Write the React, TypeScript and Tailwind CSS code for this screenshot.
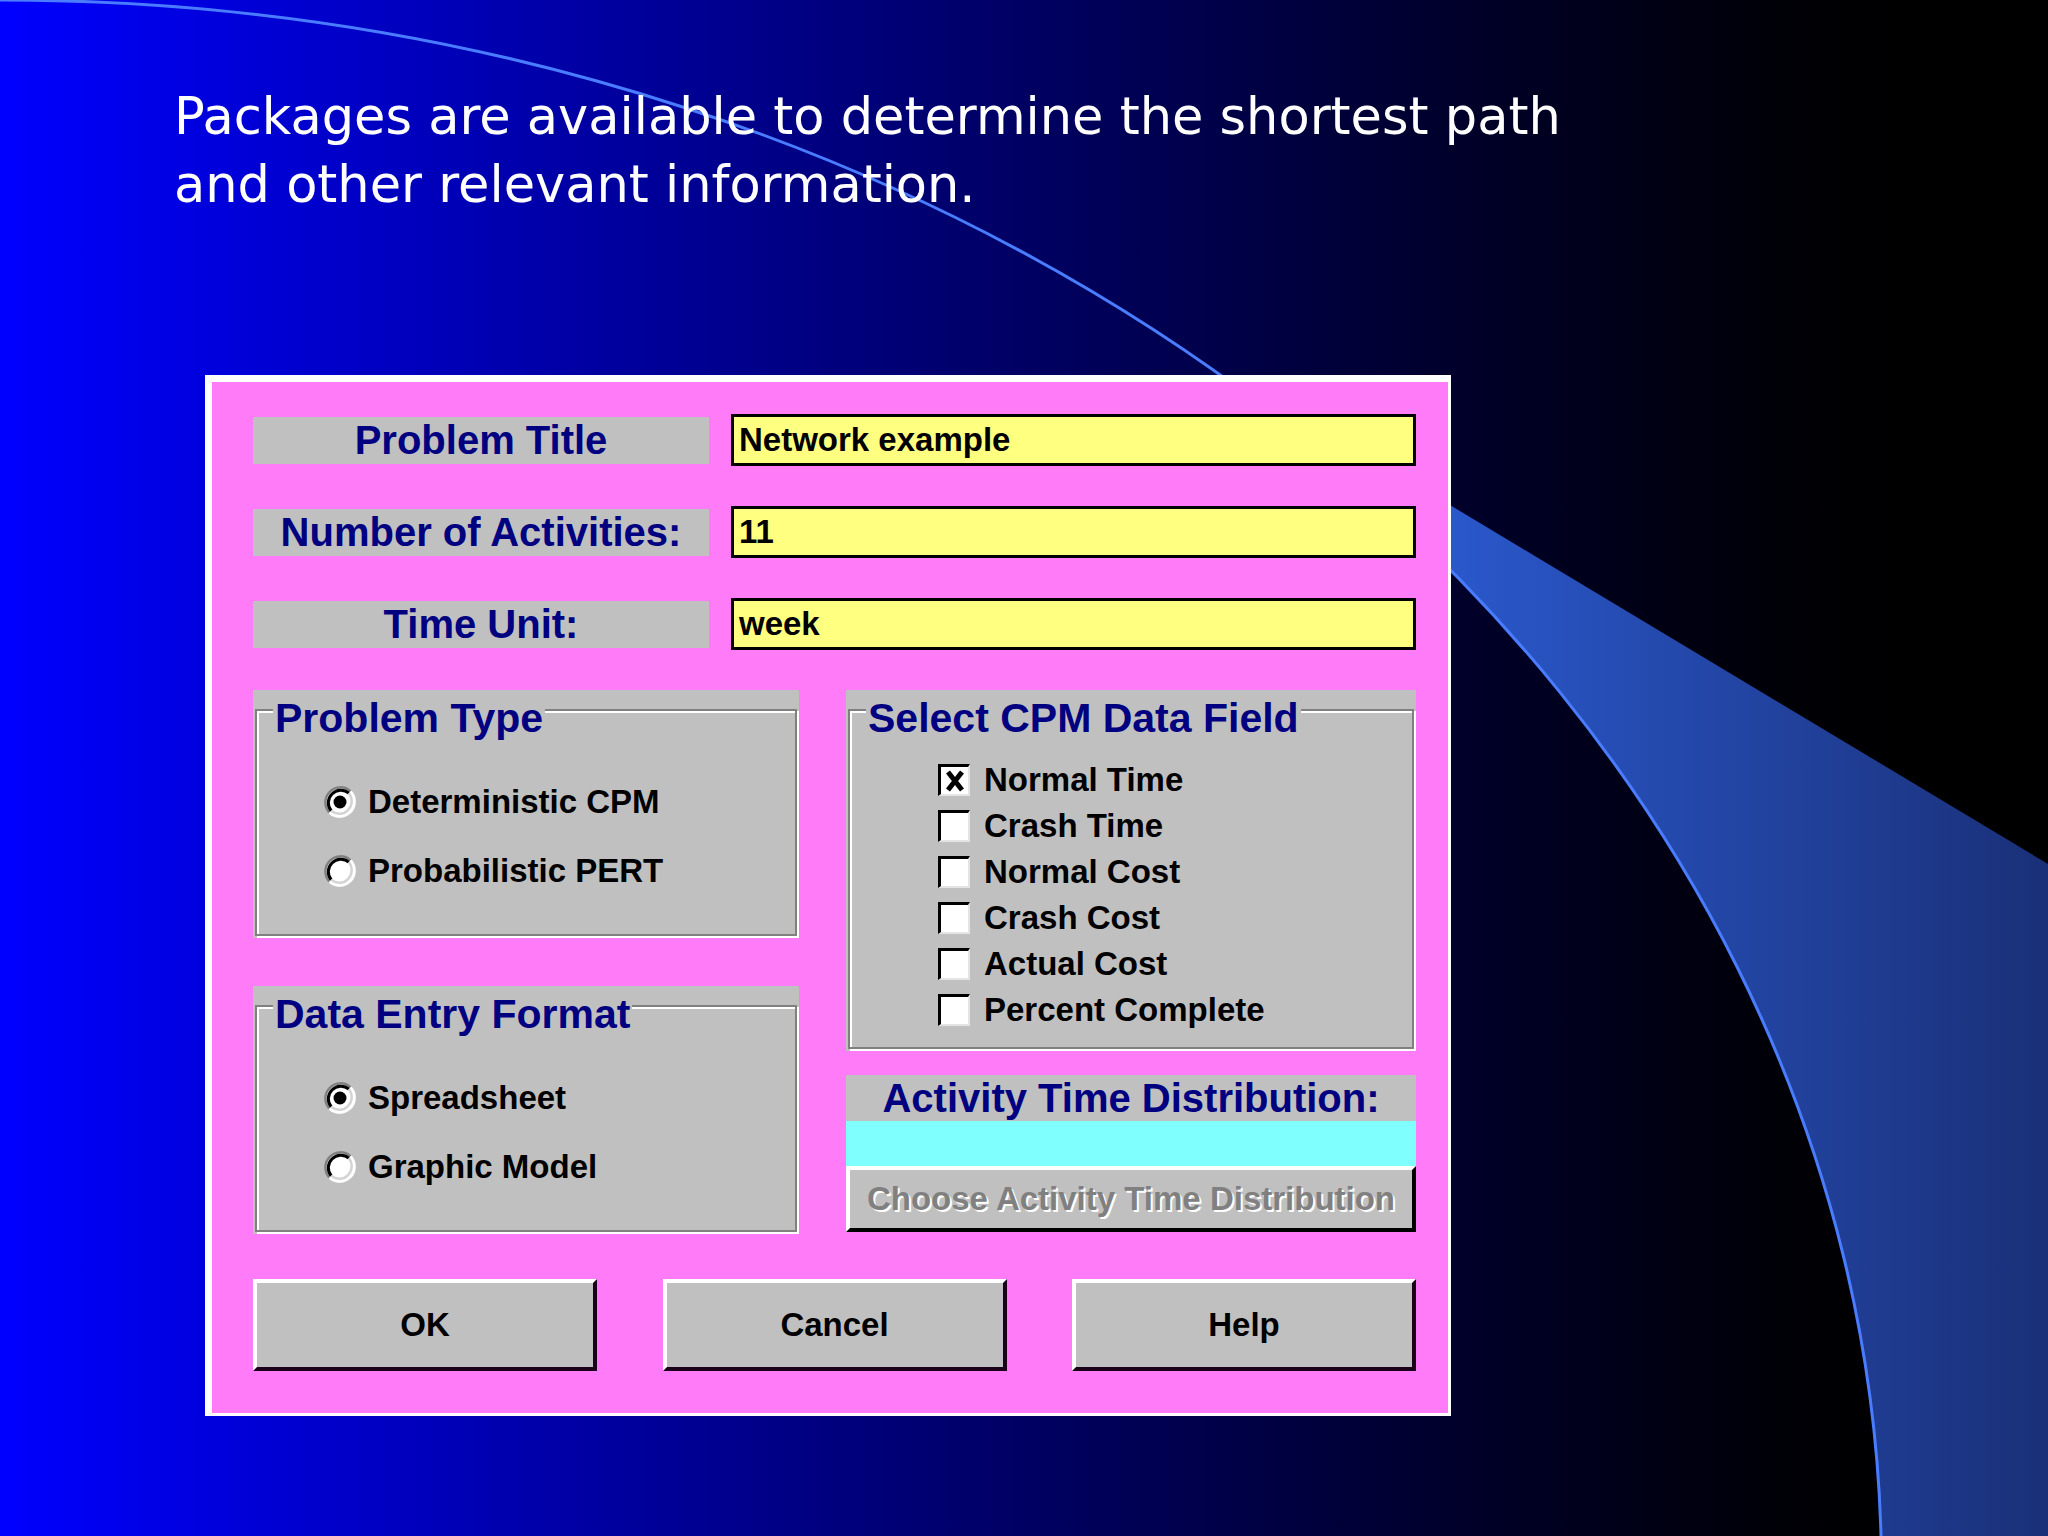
import React from 'react';

const dlgFont = "font-['Liberation_Sans',Arial,sans-serif] font-bold";

const Radio = ({ checked }: { checked?: boolean }) => (
  <svg width="34" height="34" viewBox="0 0 34 34" className="shrink-0">
    <circle cx="17" cy="17" r="15" fill="#ffffff" />
    <path d="M 6.4 27.6 A 15 15 0 0 1 27.6 6.4" stroke="#808080" strokeWidth="2.5" fill="none" />
    <path d="M 27.6 6.4 A 15 15 0 0 1 6.4 27.6" stroke="#ffffff" strokeWidth="2.5" fill="none" />
    <path d="M 8.2 25.8 A 12.5 12.5 0 0 1 25.8 8.2" stroke="#000000" strokeWidth="3" fill="none" />
    <path d="M 25.8 8.2 A 12.5 12.5 0 0 1 8.2 25.8" stroke="#d4d4d4" strokeWidth="2.5" fill="none" />
    {checked && <circle cx="17" cy="17" r="6.5" fill="#000000" />}
  </svg>
);

const Check = ({ checked }: { checked?: boolean }) => (
  <div className="w-[32px] h-[32px] shrink-0 bg-white border-t-[3px] border-l-[3px] border-black border-r-2 border-b-2 border-r-[#e4e4e4] border-b-[#e4e4e4] flex items-center justify-center">
    {checked && (
      <svg width="22" height="24" viewBox="0 0 22 24">
        <path d="M4 3 L18 21 M18 3 L4 21" stroke="#000" strokeWidth="5" />
      </svg>
    )}
  </div>
);

const Group = ({ title, height, children }: { title: string; height: string; children: React.ReactNode }) => (
  <div className={`relative bg-[#c0c0c0] pt-[19px] pl-[2px] pr-[2px] pb-[2px] ${height}`}>
    <div className="h-full border-2 border-[#808080] shadow-[inset_2px_2px_0_#fff,2px_2px_0_#fff]">{children}</div>
    <span className="absolute left-[20px] top-[8px] bg-[#c0c0c0] px-[2px] text-[41px] leading-none text-[#000080]">
      {title}
    </span>
  </div>
);

const Row = ({ label, value }: { label: string; value: string }) => (
  <div className="flex items-center h-[52px] gap-[22px]">
    <div className="w-[456px] h-[47px] bg-[#c0c0c0] flex items-center justify-center text-[40px] text-[#000080]">
      {label}
    </div>
    <div className="flex-1 h-[52px] border-[3px] border-black bg-[#ffff80] pl-[5px] flex items-center text-[33px] text-black">
      {value}
    </div>
  </div>
);

const Button = ({ label }: { label: string }) => (
  <div className="w-[344px] h-[92px] bg-[#c0c0c0] border-4 border-white border-b-[#1a001a] border-r-[#1a001a] flex items-center justify-center text-[33px] text-black">
    {label}
  </div>
);

export default function App() {
  return (
    <div className="relative w-[2048px] h-[1536px] overflow-hidden bg-linear-to-r from-[#0000ff] to-black">
      <svg className="absolute inset-0" width="2048" height="1536" viewBox="0 0 2048 1536">
        <defs>
          <linearGradient id="wing" x1="1300" y1="0" x2="2048" y2="0" gradientUnits="userSpaceOnUse">
            <stop offset="0" stopColor="#2e62e0" />
            <stop offset="1" stopColor="#1a3078" />
          </linearGradient>
        </defs>
        <path d="M 1300 415 L 2048 864 L 2048 1536 L 1881 1536 A 1881.4 1570 0 0 0 1300 435 Z" fill="url(#wing)" />
        <path d="M 0 0 A 1881.4 1570 0 0 1 1881 1536" stroke="#4a7cff" strokeWidth="3" fill="none" />
      </svg>

      <div className="relative pl-[174px] pt-[83px] text-white text-[51px] leading-[68px] font-['DejaVu_Sans',sans-serif]">
        <p>Packages are available to determine the shortest path</p>
        <p>and other relevant information.</p>
      </div>

      <div
        className={`relative ml-[205px] mt-[156px] w-[1246px] h-[1041px] border-l-[7px] border-t-[7px] border-r-[3px] border-b-[3px] border-white bg-[#ff7bf7] pl-[41px] pt-[32px] pr-[32px] pb-[42px] ${dlgFont}`}
      >
        <div className="flex flex-col gap-[40px]">
          <Row label="Problem Title" value="Network example" />
          <Row label="Number of Activities:" value="11" />
          <Row label="Time Unit:" value="week" />
        </div>

        <div className="flex gap-[47px] mt-[40px]">
          <div className="w-[546px] flex flex-col gap-[48px]">
            <Group title="Problem Type" height="h-[248px]">
              <div className="flex flex-col gap-[35px] pt-[74px] pl-[66px] text-[33px] text-black">
                <div className="flex items-center gap-[11px] h-[34px]">
                  <Radio checked />
                  <span>Deterministic CPM</span>
                </div>
                <div className="flex items-center gap-[11px] h-[34px]">
                  <Radio />
                  <span>Probabilistic PERT</span>
                </div>
              </div>
            </Group>
            <Group title="Data Entry Format" height="h-[248px]">
              <div className="flex flex-col gap-[35px] pt-[74px] pl-[66px] text-[33px] text-black">
                <div className="flex items-center gap-[11px] h-[34px]">
                  <Radio checked />
                  <span>Spreadsheet</span>
                </div>
                <div className="flex items-center gap-[11px] h-[34px]">
                  <Radio />
                  <span>Graphic Model</span>
                </div>
              </div>
            </Group>
          </div>

          <div className="w-[570px] flex flex-col">
            <Group title="Select CPM Data Field" height="h-[361px]">
              <div className="flex flex-col pt-[46px] pl-[88px] text-[33px] text-black">
                {['Normal Time', 'Crash Time', 'Normal Cost', 'Crash Cost', 'Actual Cost', 'Percent Complete'].map((t, i) => (
                  <div key={t} className="flex items-center gap-[14px] h-[46px]">
                    <Check checked={i === 0} />
                    <span>{t}</span>
                  </div>
                ))}
              </div>
            </Group>
            <div className="mt-[24px] h-[46px] bg-[#c0c0c0] flex items-center justify-center text-[40px] text-[#000080]">
              Activity Time Distribution:
            </div>
            <div className="h-[45px] bg-[#80ffff]" />
            <div className="h-[66px] bg-[#c0c0c0] border-4 border-white border-b-black border-r-black flex items-center justify-center text-[33px] text-[#808080] [text-shadow:2px_2px_0_#ffffff]">
              Choose Activity Time Distribution
            </div>
          </div>
        </div>

        <div className="flex justify-between mt-[45px]">
          <Button label="OK" />
          <Button label="Cancel" />
          <Button label="Help" />
        </div>
      </div>
    </div>
  );
}
